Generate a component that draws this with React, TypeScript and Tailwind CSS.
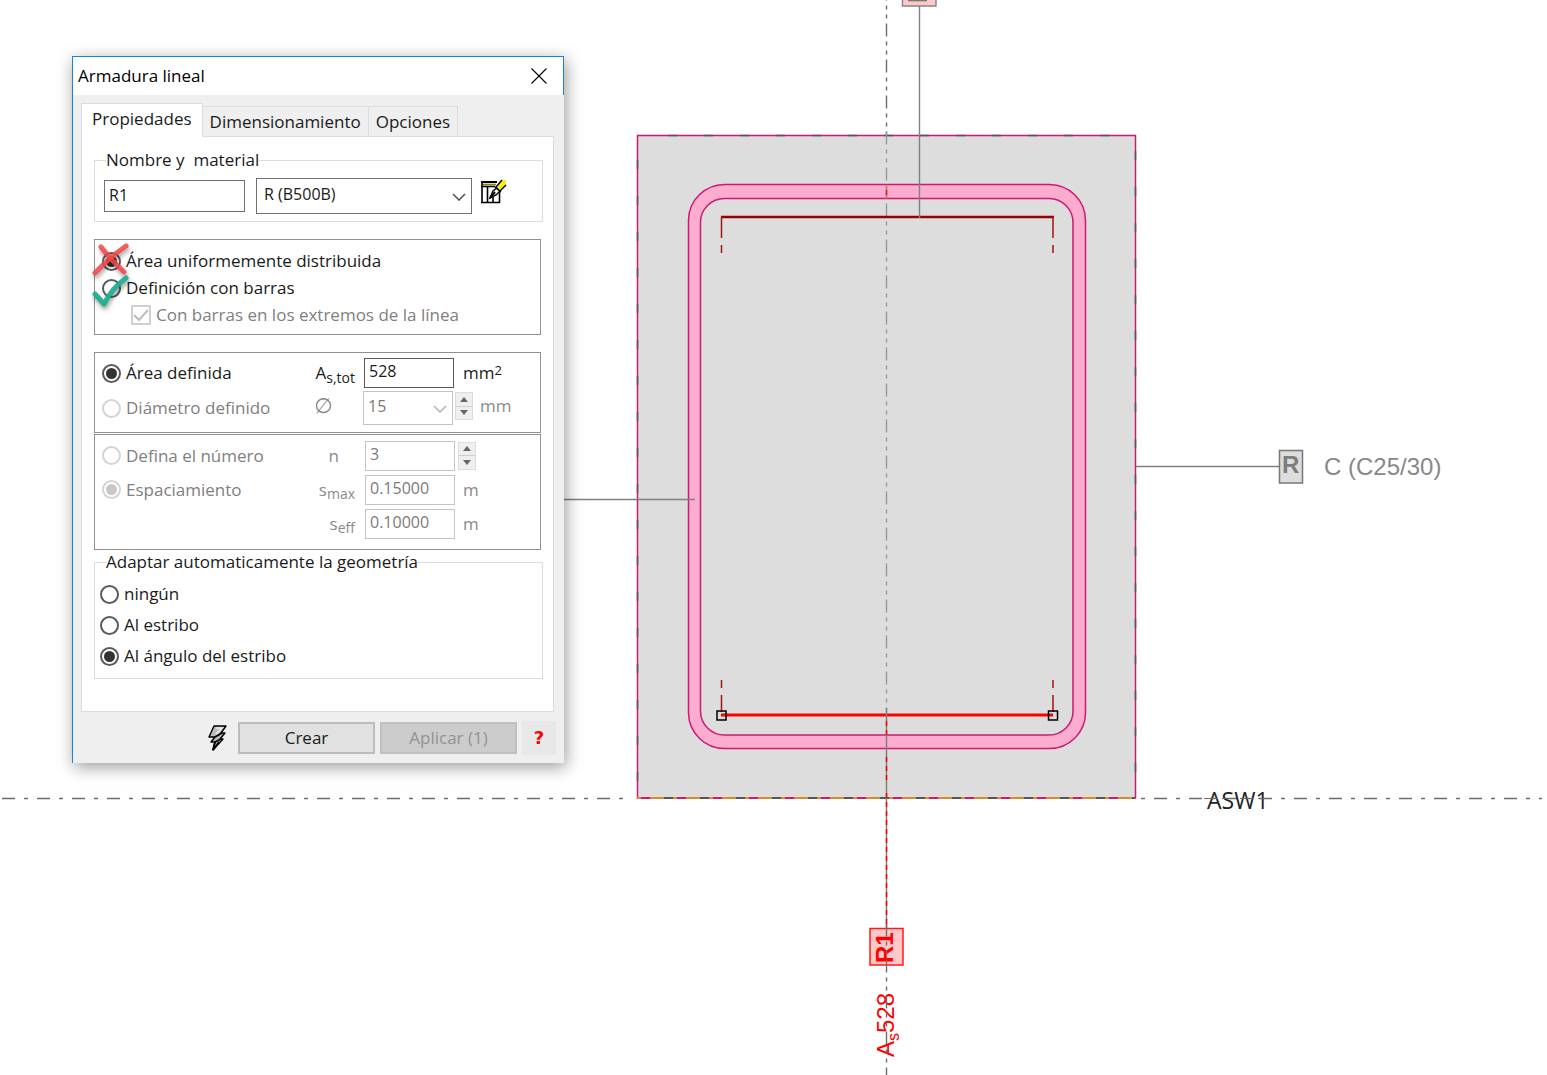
import type { ReactNode } from 'react';
import { useState } from 'react';

const CENTER_X = 886.5;

const SectionDrawing = () => (
  <svg
    className="block h-screen w-full"
    viewBox="0 0 1547 1075"
    preserveAspectRatio="xMinYMin slice"
    fill="none"
    role="img"
    aria-label="ASW1"
  >
    {/* reference axis */}
    <path d="M2 798.5H628" stroke="#6b6b6b" strokeWidth="1.4" strokeDasharray="13 9 4 9" />
    <path d="M1141 798.5H1542" stroke="#6b6b6b" strokeWidth="1.4" strokeDasharray="4 9 13 9" />

    {/* concrete outline */}
    <rect x="637.5" y="135.5" width="498" height="662.5" fill="#dddddd" stroke="#cc1a72" strokeWidth="1.5" />
    <path d="M668 135.5H1135" stroke="#555" strokeWidth="1.5" strokeDasharray="9 27" />
    <path d="M637.5 160V798" stroke="#555" strokeWidth="1.5" strokeDasharray="9 27" />
    <path d="M1135.5 151V798" stroke="#555" strokeWidth="1.5" strokeDasharray="9 27" />
    <path d="M637 798H1135" stroke="#d98a2b" strokeWidth="2" />
    <path d="M641 798H1135" stroke="#cc1a72" strokeWidth="2" strokeDasharray="9 27" />
    <path d="M664 798H1135" stroke="#555" strokeWidth="2" strokeDasharray="9 27" />

    {/* stirrup */}
    <rect x="688.5" y="184.5" width="397" height="564" rx="36" fill="#fbaccf" stroke="#cc1a72" strokeWidth="1.5" />
    <rect x="700.5" y="198.5" width="372.5" height="536.5" rx="24" fill="#dddddd" stroke="#cc1a72" strokeWidth="1.5" />

    {/* vertical axis */}
    <path d={`M${CENTER_X} -12.5V135`} stroke="#6b6b6b" strokeWidth="1.4" strokeDasharray="13 5 4 5 4 5" />
    <path d={`M${CENTER_X} 131.5V712`} stroke="#999" strokeWidth="1.4" strokeDasharray="13 5 4 5 4 5" />
    <path d={`M${CENTER_X} 186V198`} stroke="#d9822b" strokeWidth="1.6" />
    <path d={`M${CENTER_X} 190V195`} stroke="#cc1a72" strokeWidth="1.6" />

    {/* upper bars */}
    <path d="M721 217H1054" stroke="#9b0000" strokeWidth="2.6" />
    <path d="M721.5 217V238M721.5 245V253M1053 217V238M1053 245V253" stroke="#a31515" strokeWidth="1.5" />
    <path d="M919.5 6V218" stroke="#808080" strokeWidth="1.4" />
    <path d="M902.5 -20H936V6H902.5Z" fill="#ffc8c8" stroke="#858585" strokeWidth="1.4" />
    <path d="M908 0.5H927" stroke="#777" strokeWidth="1.6" />

    {/* lower bars */}
    <path d="M721.5 680V688M721.5 695V712M1053 680V688M1053 695V712" stroke="#a31515" strokeWidth="1.5" />
    <path d="M721 715H1053" stroke="#ff0000" strokeWidth="3" />
    <rect x="717" y="711" width="9" height="9" stroke="#000" strokeWidth="1.5" />
    <rect x="1048.5" y="711" width="9" height="9" stroke="#000" strokeWidth="1.5" />
    <path d={`M${CENTER_X} 708V928`} stroke="#808080" strokeWidth="1.5" />
    <path d={`M${CENTER_X} 721V800`} stroke="#ff0000" strokeWidth="1.5" strokeDasharray="5 4 5 22" />
    <path d={`M${CENTER_X} 775V780`} stroke="#ff0000" strokeWidth="1.5" />
    <path d={`M${CENTER_X} 802V928`} stroke="#ff0000" strokeWidth="1.5" strokeDasharray="5 4" />

    {/* leaders and tags */}
    <path d="M564 499.5H695" stroke="#808080" strokeWidth="1.4" />
    <path d="M1136 466.5H1279" stroke="#808080" strokeWidth="1.4" />
    <rect x="1279.5" y="450.5" width="23" height="32.5" fill="#dddddd" stroke="#777" strokeWidth="1.5" />
    <g fontFamily="'Liberation Sans', sans-serif" fontSize="24">
      <text x="1282" y="473" fontWeight="bold" fill="#7d7d7d">R</text>
      <text x="1324" y="475" fill="#888888">C (C25/30)</text>
      <rect x="870" y="928.5" width="33" height="36.5" fill="#ffc8c8" stroke="#ff1a1a" strokeWidth="1.5" />
      <text transform="translate(893 963) rotate(-90)" fontWeight="bold" fill="#ff0000">R1</text>
      <text transform="translate(894 1057) rotate(-90)" fill="#ff0000">
        A<tspan fontSize="16" dy="5">s</tspan><tspan dy="-5">528</tspan>
      </text>
    </g>
    <path d={`M${CENTER_X} 923.5V1075`} stroke="#6b6b6b" strokeWidth="1.4" strokeDasharray="13 5 4 5 4 5" />
    <text x="1207" y="809" fontFamily="'Open Sans', sans-serif" fontSize="23" fill="#222">ASW1</text>
    <path d="M1204 798.5H1270" stroke="#6b6b6b" strokeWidth="1" strokeDasharray="13 5" />
  </svg>
);

type ChoiceProps = {
  id: string;
  name: string;
  value: string;
  selected: string;
  onSelect?: (value: string) => void;
  disabled?: boolean;
  children: ReactNode;
};

const Choice = ({ id, name, value, selected, onSelect, disabled = false, children }: ChoiceProps) => (
  <div className={`flex items-center gap-[5px] ${disabled ? 'text-[#808080]' : 'text-[#1a1a1a]'}`}>
    <input
      id={id}
      type="radio"
      name={name}
      value={value}
      checked={selected === value}
      onChange={() => onSelect?.(value)}
      disabled={disabled}
      className="grid size-[19px] shrink-0 appearance-none place-content-center rounded-full border-2 border-[#5a5a5a] bg-white before:size-[11px] before:rounded-full checked:before:bg-[#333] disabled:border-[#d4d4d4] disabled:checked:before:bg-[#c8c8c8]"
    />
    <label htmlFor={id} className="whitespace-nowrap">{children}</label>
  </div>
);

const Spinner = ({ label }: { label: string }) => (
  <div className="flex h-7 w-[18px] shrink-0 flex-col border border-[#dcdcdc] bg-[#efefef]">
    <button type="button" disabled aria-label={`${label} +`} className="flex flex-1 items-center justify-center border-b border-[#d0d0d0]">
      <svg className="h-[5px] w-2" viewBox="0 0 8 5" fill="#666"><path d="M4 0L8 5H0Z" /></svg>
    </button>
    <button type="button" disabled aria-label={`${label} -`} className="flex flex-1 items-center justify-center">
      <svg className="h-[5px] w-2" viewBox="0 0 8 5" fill="#666"><path d="M4 5L8 0H0Z" /></svg>
    </button>
  </div>
);

const Chevron = ({ color }: { color: string }) => (
  <svg className="pointer-events-none absolute top-1/2 right-[6px] -mt-[3px] h-2 w-[14px]" viewBox="0 0 14 8" fill="none">
    <path d="M1 1L7 7L13 1" stroke={color} strokeWidth="1.6" />
  </svg>
);

const tabs = ['Propiedades', 'Dimensionamiento', 'Opciones'];

const disabledField = 'ml-[10px] h-[30px] w-[90px] border border-[#c4c4c4] bg-white px-1 pb-1 text-base text-[#7a7a7a]';

const ReinforcementDialog = () => {
  const [activeTab, setActiveTab] = useState('Propiedades');
  const [layout, setLayout] = useState('area');
  const [geometry, setGeometry] = useState('angulo');

  return (
    <section
      role="dialog"
      aria-labelledby="dialog-title"
      className="absolute top-14 left-[72px] w-[492px] border-t border-l border-[#1883d7] bg-[#efefef] font-['Open_Sans','Noto_Sans',sans-serif] text-[17px] leading-6 text-[#1a1a1a] shadow-[2px_4px_16px_rgba(0,0,0,0.4)]"
    >
      <header className="flex h-[38px] items-center justify-between border-r border-[#1883d7] bg-white pr-4 pl-[5px] text-black">
        <h1 id="dialog-title">Armadura lineal</h1>
        <button type="button" aria-label="Cerrar">
          <svg className="size-4" viewBox="0 0 16 16" stroke="#000" strokeWidth="1.1">
            <path d="M0.5 0.5L15.5 15.5M15.5 0.5L0.5 15.5" />
          </svg>
        </button>
      </header>

      <div className="px-2 pt-2">
        <div role="tablist" className="flex h-[33px] items-end">
          {tabs.map((tab) => (
            <button
              key={tab}
              type="button"
              role="tab"
              aria-selected={activeTab === tab}
              onClick={() => setActiveTab(tab)}
              className={
                activeTab === tab
                  ? 'relative -mb-px h-[34px] border border-b-0 border-[#dcdcdc] bg-white px-[10px] pb-1'
                  : 'h-[30px] border border-b-0 border-l-0 border-[#dcdcdc] px-[7px]'
              }
            >
              {tab}
            </button>
          ))}
        </div>

        <div role="tabpanel" className="mr-[2px] border border-[#dcdcdc] bg-white px-3 pt-[11px] pb-8">
          <fieldset className="-mr-[2px] h-[74px] border border-[#dcdcdc] pl-[9px]">
            <legend id="name-legend" className="ml-[2px] whitespace-pre">Nombre y  material</legend>
            <div className="flex items-center gap-[11px] pt-[6px]">
              <input
                aria-labelledby="name-legend"
                defaultValue="R1"
                className="h-8 w-[141px] border border-[#707070] bg-white px-1 pb-[2px] text-base"
              />
              <div className="relative w-[216px]">
                <select
                  aria-labelledby="name-legend"
                  className="h-9 w-full appearance-none border border-[#707070] bg-white px-[7px] pb-1 text-base"
                >
                  <option>R (B500B)</option>
                </select>
                <Chevron color="#555" />
              </div>
              <button type="button" aria-label="Material" className="-mt-2 -ml-[3px]">
                <svg className="h-[26px] w-[27px]" viewBox="0 0 27 26" fill="none">
                  <path d="M1 3.5H17L20 7V24H1Z" fill="#fff" />
                  <path d="M1 3H17" stroke="#000" strokeWidth="2" />
                  <path d="M2 5.5H16" stroke="#8a8a00" strokeWidth="1.6" />
                  <path d="M1 7.500H15M2 3V24M7.5 7V24M13 18V24M19.5 13V24M1 23.5H20" stroke="#000" strokeWidth="1.6" />
                  <path d="M10 19L13 12L17 9L20 12L16 16Z" fill="#fff" stroke="#000" strokeWidth="1.4" />
                  <path d="M10 19L15 13" stroke="#000" strokeWidth="2" />
                  <path d="M17 8L22 1H26V6L20 11Z" fill="#f2ef1d" />
                  <path d="M16 8L22 1M20 12L26 6M15 8L21 13" stroke="#000" strokeWidth="1.4" />
                </svg>
              </button>
            </div>
          </fieldset>

          <div className="relative mt-[17px] flex h-24 flex-col border border-[#909090] py-[9px] pl-[7px]">
            <div className="flex flex-col gap-[3px]">
              <Choice id="layout-area" name="layout" value="area" selected={layout} onSelect={setLayout}>
                Área uniformemente distribuida
              </Choice>
              <Choice id="layout-bars" name="layout" value="bars" selected={layout} onSelect={setLayout}>
                Definición con barras
              </Choice>
              <div className="flex items-center gap-[5px] pl-[29px] text-[#808080]">
                <span className="relative flex">
                  <input
                    id="end-bars"
                    type="checkbox"
                    defaultChecked
                    disabled
                    className="size-5 appearance-none border-2 border-[#d0d0d0] bg-white"
                  />
                  <svg className="pointer-events-none absolute inset-0 size-5" viewBox="0 0 20 20" fill="none">
                    <path d="M3 10L8 15L17 5" stroke="#bdbdbd" strokeWidth="2" />
                  </svg>
                </span>
                <label htmlFor="end-bars" className="whitespace-nowrap">Con barras en los extremos de la línea</label>
              </div>
            </div>
            {/* verdict marks over the two radios */}
            <svg
              className="pointer-events-none absolute top-0 -left-[5px] h-[76px] w-[42px] drop-shadow-[1px_3px_2px_rgba(0,0,0,0.4)]"
              viewBox="0 0 42 76"
              fill="none"
              strokeLinecap="round"
              strokeLinejoin="round"
              strokeWidth="5"
            >
              <path d="M11 7Q21 20 34 32" stroke="#f24848" strokeOpacity="0.85" />
              <path d="M36 6Q20 17 5 33" stroke="#f24848" strokeOpacity="0.85" />
              <path d="M5 54L14 64Q22 48 36 38" stroke="#1caf8f" strokeOpacity="0.92" />
            </svg>
          </div>

          <div className="mt-[17px] flex h-[81px] flex-col gap-[2px] border border-[#909090] pt-1 pl-[7px]">
            <div className="flex h-8 items-center">
              <div className="w-[198px]">
                <Choice id="area-defined" name="amount" value="area" selected="area">Área definida</Choice>
              </div>
              <label htmlFor="as-tot" className="w-[55px] text-right">
                A<sub className="text-[14px]">s,tot</sub>
              </label>
              <input
                id="as-tot"
                defaultValue="528"
                className="ml-[9px] h-[30px] w-[90px] border border-[#5a5a5a] bg-white px-1 pb-1 text-base"
              />
              <span className="ml-[9px]">mm<sup className="static align-[4px] text-[13px] leading-none">2</sup></span>
            </div>
            <div className="flex h-[34px] items-center text-[#8a8a8a]">
              <div className="w-[198px]">
                <Choice id="diameter-defined" name="amount" value="diameter" selected="area" disabled>
                  Diámetro definido
                </Choice>
              </div>
              <label htmlFor="diameter" className="mb-1 w-[55px] pr-2 text-center font-['DejaVu_Sans',sans-serif] text-[21px]">
                ∅
              </label>
              <div className="relative ml-2 w-[90px]">
                <select
                  id="diameter"
                  disabled
                  className="h-[34px] w-full appearance-none border border-[#c4c4c4] bg-white px-1 pb-1 text-base text-[#7a7a7a] opacity-100"
                >
                  <option>15</option>
                </select>
                <Chevron color="#b5b5b5" />
              </div>
              <div className="mb-1 ml-[2px]"><Spinner label="Ø" /></div>
              <span className="mb-1 ml-[7px]">mm</span>
            </div>
          </div>

          <div className="mt-px flex h-[116px] flex-col gap-[3px] border border-[#909090] pt-[5px] pl-[7px] text-[#8a8a8a]">
            <div className="flex h-[31px] items-center">
              <div className="w-[198px]">
                <Choice id="count-defined" name="spacing" value="count" selected="spacing" disabled>
                  Defina el número
                </Choice>
              </div>
              <label htmlFor="count" className="w-[55px] pr-4 text-right">n</label>
              <input id="count" defaultValue="3" disabled className={disabledField} />
              <div className="ml-[3px]"><Spinner label="n" /></div>
            </div>
            <div className="flex h-[31px] items-center">
              <div className="w-[198px]">
                <Choice id="spacing-defined" name="spacing" value="spacing" selected="spacing" disabled>
                  Espaciamiento
                </Choice>
              </div>
              <label htmlFor="s-max" className="w-[55px] text-right">s<sub className="text-[14px]">max</sub></label>
              <input id="s-max" defaultValue="0.15000" disabled className={disabledField} />
              <span className="ml-2">m</span>
            </div>
            <div className="flex h-[31px] items-center">
              <label htmlFor="s-eff" className="w-[253px] text-right">s<sub className="text-[14px]">eff</sub></label>
              <input id="s-eff" defaultValue="0.10000" disabled className={disabledField} />
              <span className="ml-2">m</span>
            </div>
          </div>

          <fieldset className="-mr-[2px] h-[129px] border border-[#dcdcdc] pl-[5px]">
            <legend className="ml-[6px]">Adaptar automaticamente la geometría</legend>
            <div className="flex flex-col gap-[7px] pt-2">
              <Choice id="geometry-none" name="geometry" value="ningun" selected={geometry} onSelect={setGeometry}>
                ningún
              </Choice>
              <Choice id="geometry-stirrup" name="geometry" value="estribo" selected={geometry} onSelect={setGeometry}>
                Al estribo
              </Choice>
              <Choice id="geometry-corner" name="geometry" value="angulo" selected={geometry} onSelect={setGeometry}>
                Al ángulo del estribo
              </Choice>
            </div>
          </fieldset>
        </div>
      </div>

      <footer className="flex items-center justify-end gap-[5px] pt-[9px] pb-2 pr-2">
        <button type="button" aria-label="Calcular" className="mr-[5px]">
          <svg className="h-7 w-5" viewBox="0 0 20 28" fill="none">
            <path
              d="M6 2H18L13 9H17L12 15H15L5 26L7 18H3L7 13H1Z"
              fill="#bbb"
              stroke="#000"
              strokeWidth="1.4"
              strokeLinejoin="round"
            />
            <path d="M7 13L14 9M7 18L13 15M7 18L5 26L11 18" stroke="#000" strokeWidth="1.8" />
            <path d="M8 4H14L8 10" stroke="#eee" strokeWidth="1.5" />
          </svg>
        </button>
        <button type="button" className="h-8 w-[137px] border-2 border-[#bcbcbc] bg-[#e1e1e1]">Crear</button>
        <button type="button" disabled className="h-8 w-[137px] border-2 border-[#c0c0c0] bg-[#cccccc] text-[#939393]">
          Aplicar (1)
        </button>
        <button type="button" aria-label="Ayuda" className="size-[34px] bg-[#e8e8e8] font-['DejaVu_Sans',sans-serif] text-lg font-bold text-[#ff0000]">
          ?
        </button>
      </footer>
    </section>
  );
};

export default function App() {
  return (
    <main className="relative min-h-screen w-full overflow-hidden bg-white">
      <SectionDrawing />
      <ReinforcementDialog />
    </main>
  );
}
